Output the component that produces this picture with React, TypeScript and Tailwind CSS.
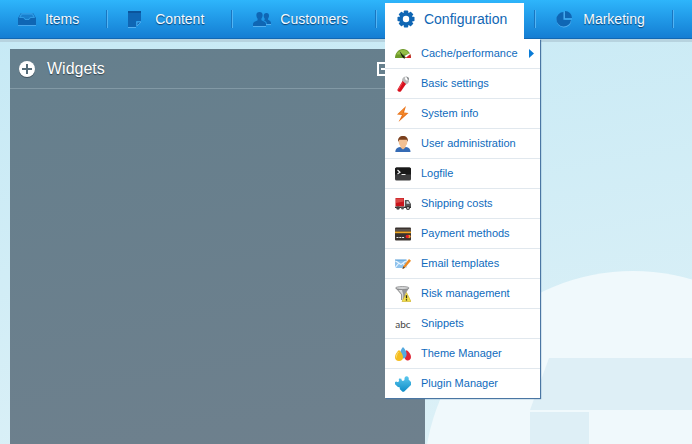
import React from "react";

const InboxIcon = () => (
  <svg viewBox="0 0 18 18" className="size-[18px]" aria-hidden="true">
    <path d="M0 15.500h18" stroke="#4ba8ec" />
    <path d="M3 3h12l3 5v7H0V8z" fill="#0f66b4" />
    <path d="M3.500 3.500h11l2 4h-4l-1.500 2H7l-1.500-2h-4z" fill="#2492df" stroke="#3ba7ee" strokeWidth=".7" />
    <path d="M4 5h10l1 2h-3l-1.500 2h-3L6 7H3z" fill="#1a7fcd" />
  </svg>
);

const PageIcon = () => (
  <svg viewBox="0 0 18 18" className="size-[18px]" aria-hidden="true">
    <path d="M0 17.500h8" stroke="#53aff0" />
    <path d="M0 1h13v10H8v6H0z" fill="#0f66b4" />
    <path d="M0 1h13v2H0z" fill="#0b549b" />
    <path d="M9 12h4l-4 4z" fill="#0f66b4" stroke="#53aff0" strokeWidth=".8" />
  </svg>
);

const PeopleIcon = () => (
  <svg viewBox="0 0 18 18" className="size-[18px]" aria-hidden="true">
    <path d="M0 16.500h13M13 14.500h5" stroke="#53aff0" />
    <path
      d="M6.500 2c2.200 0 3.300 1.500 3.100 3.600-.1 1.700-.7 2.400-1.200 3.200v1.500c1.500 1 4.600 1.600 4.600 3.700v2H0v-2c0-2.100 3-2.700 4.600-3.700V8.800C4 8 3.500 7.300 3.400 5.600 3.200 3.500 4.300 2 6.500 2z"
      fill="#0f66b4"
    />
    <path
      d="M13.500 3c1.800 0 2.600 1.200 2.500 2.900-.1 1.400-.6 2-1 2.600v1.200c1.300.8 3 1.300 3 3V14h-4c-.2-2.200-2-3-3.300-3.700l1-.6V8.500c-.4-.6-.9-1.200-1-2.600C10.600 4.200 11.700 3 13.500 3z"
      fill="#0f66b4"
    />
  </svg>
);

const GearIcon = () => (
  <svg viewBox="0 0 18 18" className="size-[18px]" aria-hidden="true">
    <g fill="#0f66b4">
      <rect x="6.800" y=".5" width="4.400" height="17" rx=".8" />
      <rect x="6.800" y=".5" width="4.400" height="17" rx=".8" transform="rotate(45 9 9)" />
      <rect x="6.800" y=".5" width="4.400" height="17" rx=".8" transform="rotate(90 9 9)" />
      <rect x="6.800" y=".5" width="4.400" height="17" rx=".8" transform="rotate(135 9 9)" />
      <circle cx="9" cy="9" r="6.800" />
    </g>
    <circle cx="9" cy="9" r="3.200" fill="#fff" />
  </svg>
);

const PieIcon = () => (
  <svg viewBox="0 0 18 18" className="size-[18px]" aria-hidden="true">
    <path d="M7.500 3a7.300 7.300 0 1 0 7.700 8H7.500z" fill="#53aff0" />
    <path d="M7.500 2a7.300 7.300 0 1 0 7.500 8H7.500z" fill="#0f66b4" />
    <path d="M9 1a7 7 0 0 1 7 7H9z" fill="#0f66b4" />
    <path d="M8.300 1.500v7.500H16" fill="none" stroke="#53aff0" strokeWidth=".9" />
  </svg>
);

const GaugeIcon = () => (
  <svg viewBox="0 0 16 16" className="size-4" aria-hidden="true">
    <path d="M0 12C0 7 3.500 3 8 3s8 4 8 9z" fill="#6f9a2b" />
    <path d="M1.500 8.500C3 5.500 5 4 8 4s5 1.500 6.300 4.300z" fill="#94bd46" />
    <path d="M10 12l5-4.200c.7 1.300 1 2.700 1 4.200z" fill="#d3202a" />
    <path d="M9.500 10l5-2.800.6 1-4 3.300z" fill="#fff" />
    <path d="M4.500 5l3.500 4.300c1.500.2 2 1.700 1.500 3.700L7 10.500z" fill="#15180f" />
  </svg>
);

const KnifeIcon = () => (
  <svg viewBox="0 0 16 16" className="size-4" aria-hidden="true">
    <path d="M7 6C6.500 3 8 .8 10.500.5L10 3l1.500 1.500L14 4c.3 2.500-1.500 4.500-4 4.500z" fill="#b9bbbc" />
    <path d="M10.500.5c1.200-.3 3 .4 3.500 1.800V4l-1.300-.2-1-2.200z" fill="#8d9092" />
    <path d="M7.500 5l3.500 3-5 7.200c-1 1.200-4 .2-3.500-1.700z" fill="#d80f1c" />
    <path d="M7.500 6.500l-4 7" stroke="#f1545c" strokeWidth=".9" />
  </svg>
);

const BoltIcon = () => (
  <svg viewBox="0 0 16 16" className="size-4" aria-hidden="true">
    <path d="M11 0L2 8.500l5 .4L3.500 16 13.500 7 9 6.500z" fill="#e8731b" />
    <path d="M9.500 2L4 7.800l4.500.5-1.500 3L11.500 7.500 7.500 7z" fill="#f28a2c" />
  </svg>
);

const UserIcon = () => (
  <svg viewBox="0 0 16 16" className="size-4" aria-hidden="true">
    <path d="M.3 16c0-3.200 1.800-4.600 4.700-5h6c2.900.4 4.500 1.800 4.500 5z" fill="#356bb5" />
    <path d="M5.500 9h5v2.500L8 13.500l-2.500-2z" fill="#f0b988" />
    <path d="M3.800 3h8.400v3.500C12.200 9 10 11 8 11S3.800 9 3.800 6.500z" fill="#f2c093" />
    <path d="M3.200 6C2.500 1.800 5 0 8 0s5.500 1.800 4.800 6l-1-2.300H4.300z" fill="#7a3f1d" />
  </svg>
);

const TerminalIcon = () => (
  <svg viewBox="0 0 16 16" className="size-4" aria-hidden="true">
    <rect y="1.500" width="16" height="13" rx="1.500" fill="#3c3c3d" />
    <path d="M0 3a1.500 1.500 0 0 1 1.500-1.500h13A1.500 1.500 0 0 1 16 3v5.500H0z" fill="#191919" />
    <path d="M2.500 4L5 6.200 2.500 8M6.500 8.500h4" fill="none" stroke="#eee" strokeWidth="1.200" />
  </svg>
);

const TruckIcon = () => (
  <svg viewBox="0 0 16 16" className="size-4" aria-hidden="true">
    <path d="M.5 2h8.500v8.500H.5z" fill="#c9151c" />
    <path d="M1 2.500h7.500v3L1 7z" fill="#d94846" />
    <path d="M9.800 4h3.700L16 8v4H9.800z" fill="#555" />
    <path d="M11.500 5.200h1.700l1.500 2.600h-3.200z" fill="#d9e0e5" />
    <path d="M0 10.700h16V12H0z" fill="#333" />
    <circle cx="3" cy="12" r="1.800" fill="#444" />
    <circle cx="7.500" cy="12" r="1.500" fill="#555" />
    <circle cx="13" cy="12" r="2" fill="#333" />
    <circle cx="13" cy="12" r=".9" fill="#ddd" />
  </svg>
);

const CardIcon = () => (
  <svg viewBox="0 0 16 16" className="size-4" aria-hidden="true">
    <rect y="1.500" width="16" height="13" rx="1" fill="#39322e" />
    <path d="M0 3h16v2H0z" fill="#5a524c" />
    <path d="M0 5.500h16v1.700H0z" fill="#efa724" />
    <path d="M1.500 11.500h8" stroke="#eee" strokeDasharray="2 .8" />
    <circle cx="14" cy="10.500" r="1.700" fill="#f3942b" />
    <circle cx="12.300" cy="10.500" r="1.700" fill="#e31f23" />
  </svg>
);

const MailIcon = () => (
  <svg viewBox="0 0 16 16" className="size-4" aria-hidden="true">
    <path d="M0 4h11.500v8H0z" fill="#8fc2ec" />
    <path d="M0 4.500l6 4 5.500-4M0 12l4-5M11 12L8 7" fill="none" stroke="#e9f5ff" strokeWidth="1.100" />
    <path d="M0 4h11.500" stroke="#539bd4" />
    <path d="M14 3l2 1.800-6 7L7.500 13l.7-2.500z" fill="#ed8a23" />
    <path d="M8.200 10.500l1.800 1.300L7.500 13z" fill="#574839" />
  </svg>
);

const FunnelIcon = () => (
  <svg viewBox="0 0 16 16" className="size-4" aria-hidden="true">
    <path d="M.5 2L6 8.500V14h4V8.500L14 2z" fill="#969798" />
    <path d="M3.500 4l3.700 4.500v5.500h1V8.500L7 4z" fill="#dedede" />
    <ellipse cx="7.300" cy="2" rx="6.800" ry="1.500" fill="#d4d5d6" stroke="#7c7e80" strokeWidth=".7" />
    <path d="M11.500 6.500L16 15.500H7z" fill="#f3e04a" stroke="#c9ad25" strokeWidth=".6" />
    <path d="M11.500 9.200v3M11.500 13.200v1.200" stroke="#292615" strokeWidth="1.300" />
  </svg>
);

const AbcIcon = () => (
  <span
    className="flex h-4 w-4 items-center justify-center font-['Lato',sans-serif] text-[10px] leading-4 text-[#444]"
    aria-hidden="true"
  >
    abc
  </span>
);

const DropsIcon = () => (
  <svg viewBox="0 0 16 16" className="size-4" aria-hidden="true">
    <path d="M11.500 4c2.500 1.500 4.500 4.500 4.500 7s-2 4-4 3.500S9 11.500 9.500 9z" fill="#df2638" />
    <path d="M8 1c2.200 2.200 3.800 5 3.600 7.500S10 12.500 8 12.500 4.700 11 4.800 8.500 6 3.200 8 1z" fill="#55a9df" />
    <path d="M4 4c2 1.500 4 4.800 4 7.300S6.500 15 4 15 0 13.500 0 11s2-5.500 4-7z" fill="#f5bd20" />
    <path d="M3.500 6C1.800 8 1.200 10 1.500 11.500" stroke="#fbe078" fill="none" />
  </svg>
);

const PuzzleIcon = () => (
  <svg viewBox="0 0 16 16" className="size-4" aria-hidden="true">
    <defs>
      <linearGradient id="puzzle" x1="0" y1="0" x2="0" y2="1">
        <stop offset="0" stopColor="#5cc8ee" />
        <stop offset="1" stopColor="#0f8dc8" />
      </linearGradient>
    </defs>
    <path
      d="M4 2.500l2.500.3c-.6 2.400 2.600 3 3 .7C9.200 1.200 10.500 0 12 .2s2.200 1.800 1.600 3.300L16 6v3l-7 6.700H7.500L4.700 13c.6-1.200-.4-2.200-1.500-1.800L0 8.200V6l1.500-.6c1.400 1.400 3.300.2 2.300-1.600z"
      fill="url(#puzzle)"
    />
  </svg>
);

const PlusCircleIcon = () => (
  <svg viewBox="0 0 16 16" className="size-4 drop-shadow-[0_1px_0_#40525d]" aria-hidden="true">
    <circle cx="8" cy="8" r="8" fill="#fff" />
    <path d="M8 3v10M3 8h10" stroke="#566d7a" strokeWidth="2" />
  </svg>
);

const MinimizeIcon = () => (
  <svg viewBox="0 0 14 14" className="size-3.5" aria-hidden="true">
    <path d="M1 1h12v12H1z" fill="none" stroke="#fff" strokeWidth="2" />
    <path d="M4 7h6" stroke="#fff" strokeWidth="2" />
  </svg>
);

type MenuEntry = { label: string; icon: React.ComponentType; sub?: boolean };

const configuration: MenuEntry[] = [
  { label: "Cache/performance", icon: GaugeIcon, sub: true },
  { label: "Basic settings", icon: KnifeIcon },
  { label: "System info", icon: BoltIcon },
  { label: "User administration", icon: UserIcon },
  { label: "Logfile", icon: TerminalIcon },
  { label: "Shipping costs", icon: TruckIcon },
  { label: "Payment methods", icon: CardIcon },
  { label: "Email templates", icon: MailIcon },
  { label: "Risk management", icon: FunnelIcon },
  { label: "Snippets", icon: AbcIcon },
  { label: "Theme Manager", icon: DropsIcon },
  { label: "Plugin Manager", icon: PuzzleIcon },
];

const tabs = [
  { label: "Items", icon: InboxIcon },
  { label: "Content", icon: PageIcon },
  { label: "Customers", icon: PeopleIcon },
  { label: "Configuration", icon: GearIcon, open: true },
  { label: "Marketing", icon: PieIcon },
];

function ConfigurationMenu() {
  return (
    <ul className="absolute top-full left-0 w-[155px] bg-white shadow-[1px_1px_1px_#4a76a3]">
      {configuration.map(({ label, icon: Icon, sub }) => (
        <li key={label} className="border-b border-[#e1e8ee] last:border-b-0">
          <button className="flex h-[29px] w-full items-center gap-2.5 pr-1.5 pl-2.5 text-left text-[11px] whitespace-nowrap text-[#0f6bbd]">
            <Icon />
            <span className="flex-1">{label}</span>
            {sub && (
              <svg viewBox="0 0 5 9" className="h-[9px] w-[5px]" aria-hidden="true">
                <path d="M0 0l5 4.500L0 9z" fill="#0a7bd6" />
              </svg>
            )}
          </button>
        </li>
      ))}
    </ul>
  );
}

function NavBar() {
  return (
    <nav className="relative z-10 h-[39px] bg-linear-to-b from-[#2eb5fb] to-[#147cd2] shadow-[inset_0_-1px_0_#1268b3,0_3px_0_#b7d3df]">
      <ul className="flex h-full items-stretch pt-[3px] pl-1.5">
        {tabs.map(({ label, icon: Icon, open }) => (
          <li key={label} className="flex shrink-0 items-stretch">
            <div className="relative">
              <button
                aria-expanded={open}
                className={
                  open
                    ? "flex h-full items-center gap-[9px] bg-white pr-[17px] pb-1 pl-3 text-sm text-[#0f66b4]"
                    : "flex h-full items-center gap-[9px] pr-[17px] pb-1 pl-3 text-sm text-[#f4faff] [text-shadow:0_1px_1px_#0b3f70]"
                }
              >
                <Icon />
                {label}
              </button>
              {open && <ConfigurationMenu />}
            </div>
            <span className="mt-[7px] mr-2 ml-2.5 h-[18px] w-0.5 border-l border-[#1976c0] bg-[#52b4f4]" />
          </li>
        ))}
      </ul>
    </nav>
  );
}

function Landscape() {
  return (
    <svg
      viewBox="0 0 692 444"
      preserveAspectRatio="xMaxYMax slice"
      className="absolute inset-0 size-full"
      aria-hidden="true"
    >
      <circle cx="633" cy="480" r="209" fill="#f0f9fc" />
      <path d="M549 358h143v52H530z" fill="#deeff6" />
      <path d="M530 412h59v32h-59z" fill="#deeff6" />
    </svg>
  );
}

export default function App() {
  return (
    <div className="relative flex min-h-screen flex-col overflow-hidden bg-linear-[170deg] from-[#c5e9f5] to-[#def1f7] font-['Liberation_Sans',Arial,sans-serif]">
      <Landscape />
      <NavBar />
      <main className="relative mt-2.5 ml-2.5 flex w-3/5 flex-1 flex-col bg-linear-[170deg] from-[#657f8d] to-[#6e808d]">
        <header className="flex h-10 items-center gap-3 border-b border-[#8299a5] pr-[34px] pl-[9px]">
          <button aria-label="Add widget">
            <PlusCircleIcon />
          </button>
          <h1 className="flex-1 text-base text-white [text-shadow:0_1px_1px_#33434d]">Widgets</h1>
          <button aria-label="Minimize">
            <MinimizeIcon />
          </button>
        </header>
      </main>
    </div>
  );
}
